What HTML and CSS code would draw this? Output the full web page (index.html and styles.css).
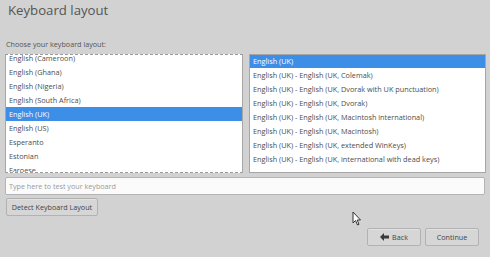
FILE: index.html
```html
<!DOCTYPE html>
<html>
<head>
<meta charset="utf-8">
<link rel="stylesheet" href="styles.css">
</head>
<body>
<div class="page">
  <h1 class="title">Keyboard layout</h1>
  <div class="label">Choose your keyboard layout:</div>
  <div class="lists">
    <div class="list list-left">
      <div class="scroller">
        <div class="row">English (Cameroon)</div>
        <div class="row">English (Ghana)</div>
        <div class="row">English (Nigeria)</div>
        <div class="row">English (South Africa)</div>
        <div class="row sel">English (UK)</div>
        <div class="row">English (US)</div>
        <div class="row">Esperanto</div>
        <div class="row">Estonian</div>
        <div class="row">Faroese</div>
      </div>
    </div>
    <div class="list list-right">
      <div class="row sel">English (UK)</div>
      <div class="row">English (UK) - English (UK, Colemak)</div>
      <div class="row">English (UK) - English (UK, Dvorak with UK punctuation)</div>
      <div class="row">English (UK) - English (UK, Dvorak)</div>
      <div class="row">English (UK) - English (UK, Macintosh international)</div>
      <div class="row">English (UK) - English (UK, Macintosh)</div>
      <div class="row">English (UK) - English (UK, extended WinKeys)</div>
      <div class="row">English (UK) - English (UK, international with dead keys)</div>
    </div>
  </div>
  <input class="test" type="text" placeholder="Type here to test your keyboard">
  <div class="detect-row"><button class="btn detect">Detect Keyboard Layout</button></div>
  <div class="footer">
    <button class="btn nav"><svg class="arrow" width="9" height="8" viewBox="0 0 9 8"><path d="M0 4 L4 0 L4 2.5 L9 2.5 L9 5.5 L4 5.5 L4 8 Z" fill="#3a3a3a"/></svg>Back</button>
    <button class="btn nav">Continue</button>
  </div>
</div>
<svg class="cursor" width="10" height="15" viewBox="0 0 10 15"><path d="M1 1 L1 12 L3.5 9.5 L5.5 14 L7 13.3 L5.2 9 L8.5 9 Z" fill="#fff" stroke="#333" stroke-width="1" stroke-linejoin="round"/></svg>
</body>
</html>
```
FILE: styles.css
```css
html, body {
  margin: 0;
  padding: 0;
  background: #d2d2d2;
  width: 490px;
  height: 257px;
  overflow: hidden;
  font-family: "Open Sans", "Noto Sans", sans-serif;
  color: #4a4a4a;
}
.page {
  padding: 0 5px;
  display: flex;
  flex-direction: column;
}
.title {
  margin: 0;
  padding: 0 0 0 3px;
  font-size: 13.2px;
  font-weight: 400;
  line-height: 20px;
  color: #555;
}
.label {
  margin-top: 18px;
  font-size: 7.2px;
  line-height: 12px;
  color: #555;
  padding-left: 1px;
}
.lists {
  display: grid;
  grid-template-columns: 238px 237px;
  column-gap: 6px;
  height: 119px;
  margin-top: 4px;
}
.list {
  background: #fff;
  border: 1px solid #a6a6a6;
  overflow: hidden;
  position: relative;
}
.list-left {
  border-top: 1px dashed #9a9a9a;
  border-bottom: 1px dashed #9a9a9a;
}
.scroller {
  margin-top: -4px;
}
.row {
  height: 14px;
  line-height: 14px;
  font-size: 7.3px;
  padding-left: 3px;
  white-space: nowrap;
  color: #4d4d4d;
}
.row.sel {
  background: #3d8ee6;
  color: #fff;
}
.list-right .row { padding-left: 3px; }
.list-right .row.sel { height: 13px; line-height: 13px; }
.test {
  margin: 4px 0 0 0;
  height: 18px;
  box-sizing: border-box;
  width: 480px;
  border: 1px solid #b4b4b4;
  border-radius: 2px;
  background: #fbfbfb;
  font-family: "Open Sans", "Noto Sans", sans-serif;
  font-size: 7.2px;
  padding: 0 3px;
  outline: none;
}
.test::placeholder { color: #9a9a9a; }
.detect-row {
  display: flex;
  margin-top: 3px;
}
.btn {
  height: 18px;
  box-sizing: border-box;
  border: 1px solid #b2b2b2;
  border-radius: 2px;
  background: #d6d6d6;
  box-shadow: 0 1px 0 rgba(255,255,255,0.3) inset;
  font-family: "Open Sans", "Noto Sans", sans-serif;
  font-size: 7.2px;
  color: #444;
  padding: 0;
  display: flex;
  align-items: center;
  justify-content: center;
}
.detect {
  width: 92px;
  margin-left: 1px;
}
.footer {
  display: flex;
  justify-content: flex-end;
  gap: 4px;
  margin-top: 12px;
  padding-right: 6px;
}
.nav { width: 54px; }
.arrow { margin-right: 3px; }
.cursor {
  position: absolute;
  left: 352px;
  top: 211px;
}
```
